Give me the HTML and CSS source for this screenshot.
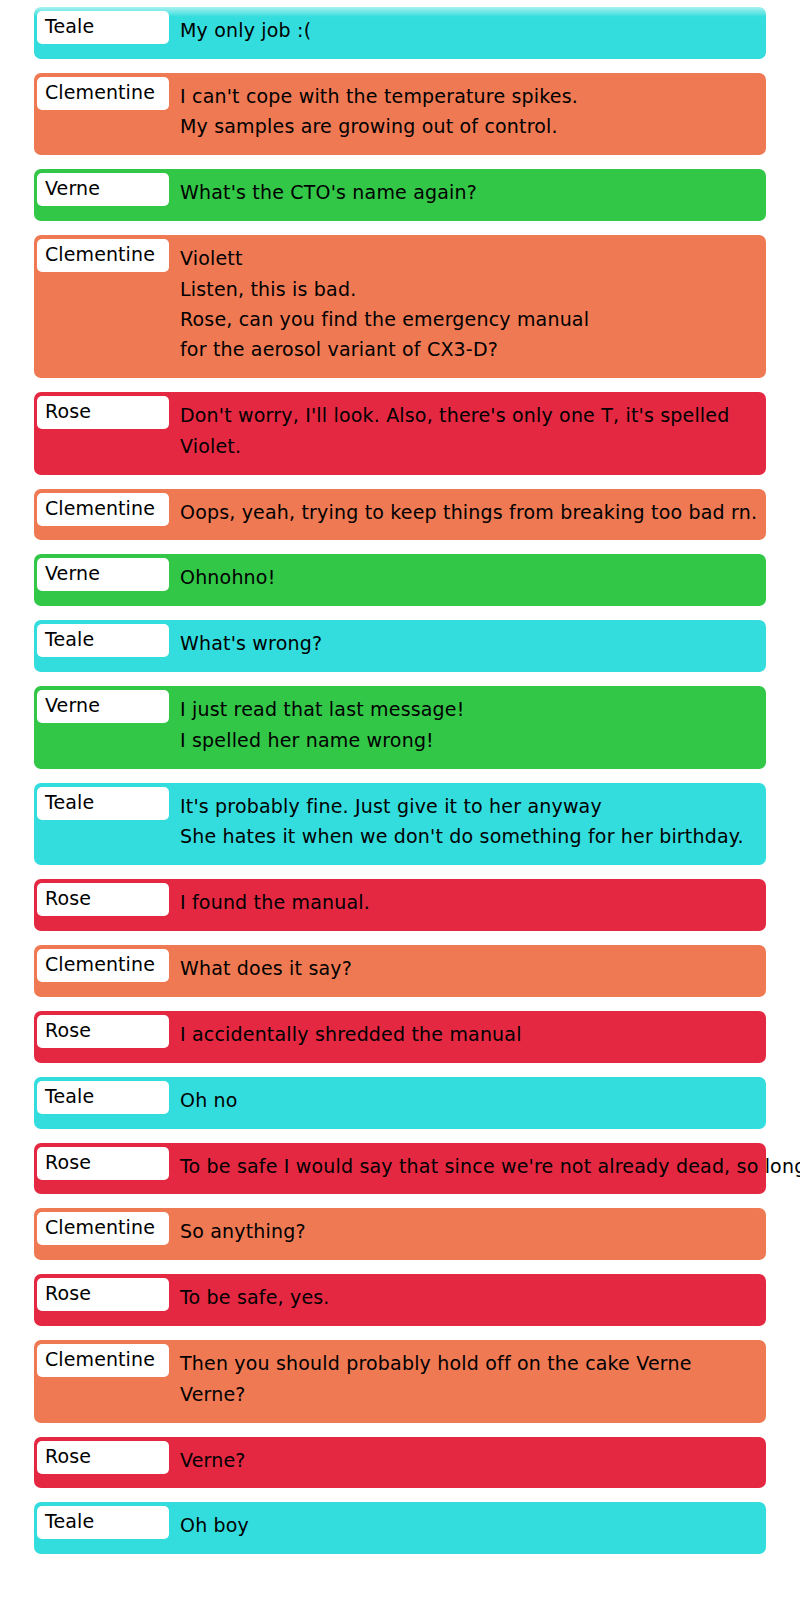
FILE: index.html
```html
<!DOCTYPE html>
<html lang="en">
<head>
<meta charset="utf-8">
<title>Chat</title>
<link rel="stylesheet" href="styles.css">
</head>
<body>
<div class="fade"></div>
<main class="chat">
  <div class="msg teal"><div class="name">Teale</div><div class="text">My only job :(</div></div>
  <div class="msg orange"><div class="name">Clementine</div><div class="text">I can't cope with the temperature spikes.<br>My samples are growing out of control.</div></div>
  <div class="msg green"><div class="name">Verne</div><div class="text">What's the CTO's name again?</div></div>
  <div class="msg orange"><div class="name">Clementine</div><div class="text">Violett<br>Listen, this is bad.<br>Rose, can you find the emergency manual<br>for the aerosol variant of CX3-D?</div></div>
  <div class="msg red"><div class="name">Rose</div><div class="text">Don't worry, I'll look. Also, there's only one T, it's spelled<br>Violet.</div></div>
  <div class="msg orange"><div class="name">Clementine</div><div class="text">Oops, yeah, trying to keep things from breaking too bad rn.</div></div>
  <div class="msg green"><div class="name">Verne</div><div class="text">Ohnohno!</div></div>
  <div class="msg teal"><div class="name">Teale</div><div class="text">What's wrong?</div></div>
  <div class="msg green"><div class="name">Verne</div><div class="text">I just read that last message!<br>I spelled her name wrong!</div></div>
  <div class="msg teal"><div class="name">Teale</div><div class="text">It's probably fine. Just give it to her anyway<br>She hates it when we don't do something for her birthday.</div></div>
  <div class="msg red"><div class="name">Rose</div><div class="text">I found the manual.</div></div>
  <div class="msg orange"><div class="name">Clementine</div><div class="text">What does it say?</div></div>
  <div class="msg red"><div class="name">Rose</div><div class="text">I accidentally shredded the manual</div></div>
  <div class="msg teal"><div class="name">Teale</div><div class="text">Oh no</div></div>
  <div class="msg red"><div class="name">Rose</div><div class="text">To be safe I would say that since we're not already dead, so long as we stay away from it we should be fine.</div></div>
  <div class="msg orange"><div class="name">Clementine</div><div class="text">So anything?</div></div>
  <div class="msg red"><div class="name">Rose</div><div class="text">To be safe, yes.</div></div>
  <div class="msg orange"><div class="name">Clementine</div><div class="text">Then you should probably hold off on the cake Verne<br>Verne?</div></div>
  <div class="msg red"><div class="name">Rose</div><div class="text">Verne?</div></div>
  <div class="msg teal"><div class="name">Teale</div><div class="text">Oh boy</div></div>
</main>
</body>
</html>
```
FILE: styles.css
```css
html {
  overflow-x: hidden;
}

body {
  margin: 0;
  background: #ffffff;
  font-family: "DejaVu Sans", "Liberation Sans", sans-serif;
  font-size: 19px;
  letter-spacing: 0.18px;
  color: #000000;
}

.fade {
  position: fixed;
  top: 0;
  left: 0;
  right: 0;
  height: 17px;
  background: linear-gradient(to bottom, rgba(255, 255, 255, 1) 0%, rgba(255, 255, 255, 0) 100%);
  pointer-events: none;
  z-index: 2;
}

.chat {
  display: flex;
  flex-direction: column;
  gap: 14px;
  padding: 7px 34px 40px;
}

.msg {
  display: flex;
  align-items: flex-start;
  border-radius: 7px;
  min-width: 0;
}

.teal { background: #33dddd; }
.orange { background: #ef7953; }
.green { background: #33c748; }
.red { background: #e52842; }

.name {
  flex: 0 0 auto;
  box-sizing: border-box;
  width: 132px;
  height: 33px;
  margin: 4px 11px 0 3px;
  padding: 4px 0 0 8px;
  background: #ffffff;
  border-radius: 5px;
  line-height: 22px;
  letter-spacing: 0.1px;
}

.text {
  flex: 1 1 auto;
  white-space: nowrap;
  line-height: 30.4px;
  padding: 8px 0 13.5px;
}
```
